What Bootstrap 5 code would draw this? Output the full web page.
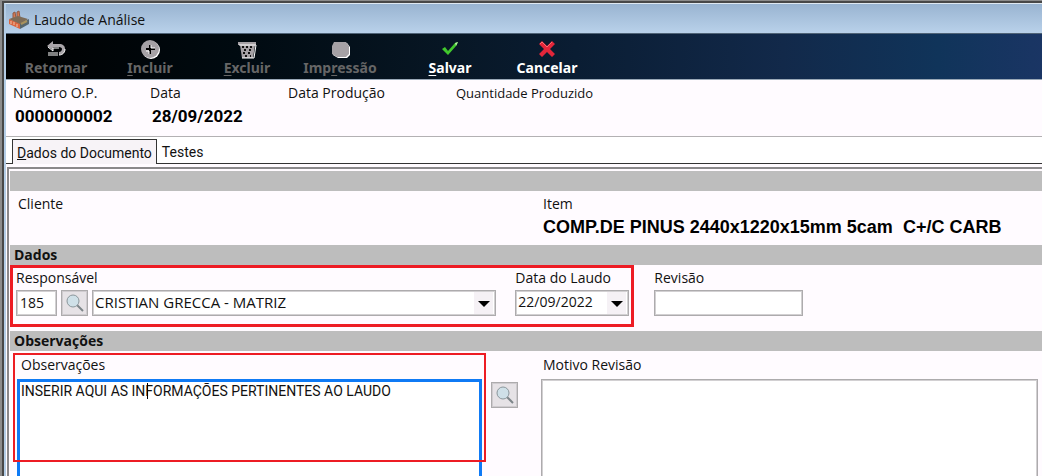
<!DOCTYPE html>
<html lang="pt-BR">
<head>
<meta charset="utf-8">
<meta name="viewport" content="width=device-width, initial-scale=1">
<title>Laudo de Análise</title>
<link href="https://cdn.jsdelivr.net/npm/bootstrap@5.3.0/dist/css/bootstrap.min.css" rel="stylesheet">
<style>
  :root { --panel: #fffbff; --bar: #bdbdbd; --edge: #adabad; --alert: #ed1c24; }
  body { font-family: "Open Sans", sans-serif; font-size: 14px; line-height: 18px; color: #111; background: var(--panel); }
  .frame { border-left: 2px solid #8c8c8c; border-top: 1px solid #8c8c8c; }
  .frame-inner { border-left: 2px solid #484848; border-top: 2px solid #484848; }
  .window { border-left: 2px solid #b4cde6; border-top: 1px solid #dfe9f2; background: var(--panel); }
  .titlebar { height: 30px; background: linear-gradient(#99b4d1, #b9d1ea); border-bottom: 1px solid #4f6377; padding: 2px 0 0 2px; }
  .toolbar { height: 46px; padding: 5px 0 0 5px; background: linear-gradient(90deg, #000 0, #000a10 22%, #071624 42%, #0a1d33 55%, #12294a 75%, #10345a 90%, #1a3564 100%); border-bottom: 1px solid #9aa9b8; }
  .tool { font: bold 14px/18px "Noto Sans", sans-serif; color: #fff; background: none; border: 0; padding: 0; }
  .tool:disabled { color: #666; }
  .tool u { text-underline-offset: 2px; }
  .tool svg { display: block; margin: 0 auto; }
  .c1 { width: 90px; } .c2 { width: 98px; } .c3 { width: 96px; } .c4 { width: 90px; } .c5 { width: 130px; } .c6 { width: 64px; }
  .summary { height: 57px; padding: 4px 0 0 7px; border-bottom: 1px solid #b3b1b3; }
  .s1 { width: 137px; } .s2 { width: 138px; } .s3 { width: 168px; } .s4 { font-size: 13px; }
  .strong-value { font: bold 17px/20px Roboto, sans-serif; color: #000; padding: 4px 0 0 2px; }
  .item-value { font: bold 18px/20px "Liberation Sans", sans-serif; color: #000; white-space: pre; padding-top: 4px; }
  .tabs { height: 27px; background: #fff; padding: 2px 0 0 6px; border-bottom: 1px solid #333; }
  .tab { font: 14px/20px Roboto, sans-serif; color: #111; background: none; border: 0; padding: 3px 5px 1px; height: 24px; }
  .tab.active { background: #f7f3f7; border: solid #333; border-width: 1px 1px 0; height: 25px; margin-bottom: -1px; padding: 3px 4px 1px; }
  .page-pane { margin: 3px 0 0 1px; border: 1px solid #8a888a; border-width: 2px 0 0 2px; padding: 2px 0 0 1px; }
  .section-bar { background: var(--bar); height: 20px; line-height: 19px; padding-left: 4px; font-weight: 700; font-size: 14px; margin: 0; }
  .split { display: grid; grid-template-columns: 531fr 501fr; }
  .indent { padding-left: 2px; }
  .lookups { width: 60.5%; border: 3px solid var(--alert); padding: 1px 2px 8px 3px; }
  .below { padding-top: 3px; }
  .field { height: 26px; border: 1px solid var(--edge); background-color: #fff; box-shadow: inset 0 0 0 1px #d2d0d2; border-radius: 0; padding: 0 0 2px 3px; line-height: 20px; color: #111; }
  select.field { appearance: none; padding-left: 2px; background: #fff url("data:image/svg+xml,%3Csvg xmlns='http://www.w3.org/2000/svg' width='21' height='22'%3E%3Cpath fill='%23f5f1f5' d='M0 0h19v22H0z'/%3E%3Cpath d='M4 9h12l-6 6z'/%3E%3C/svg%3E") right center no-repeat; }
  .person { font-size: 15px; }
  .code { width: 41px; } .date { width: 114px; margin-left: 19px; } .rev { width: 149px; margin-left: 20px; }
  .seek { width: 27px; height: 26px; border: 1px solid var(--edge); box-shadow: inset 0 0 0 1px #cfcbcf; background: #e6e2e6; padding: 0; display: flex; align-items: center; justify-content: center; }
  .obs-seek { margin: 3px 23px 0 9px; }
  .notes-cell { padding: 5px 4px 0 0; }
  .notes-cell.main { padding: 5px 0 0 7px; }
  .notes-label { margin-bottom: 5px; }
  .notes { display: block; height: 120px; resize: none; border: 1px solid var(--edge); box-shadow: inset 0 0 0 1px #d2d0d2; background: #fff; border-radius: 0; outline: 0; }
  .notes.editing { border: 3px solid #0f7af5; box-shadow: none; font: 14px/18px Roboto, sans-serif; padding: 0 1px; color: #111; }
  .mark-box { position: absolute; top: 2px; left: 3px; right: 55px; height: 109px; border: 2px solid var(--alert); pointer-events: none; }
  .caret { position: absolute; left: 137px; top: 32px; width: 1px; height: 16px; background: #000; }
</style>
</head>
<body>
<div class="frame vh-100 overflow-hidden"><div class="frame-inner"><div class="window">
  <header class="titlebar d-flex align-items-center gap-1">
    <svg width="22" height="20" viewBox="0 0 22 20" aria-hidden="true">
      <path d="M5 8V3l2-1 1 6M9 8V2l2-1 1 7" fill="#d77a52" stroke="#8e5b48"/>
      <path d="M1 9l9-3 10 3-8 6z" fill="#7d6c58"/>
      <path d="M1 9l11 5v5L1 14z" fill="#d9653f"/>
      <path d="M12 14l9-5v5l-9 5z" fill="#56666e"/>
      <path d="M3 11v3M6 12v3M9 14v3" stroke="#f1c4a8"/>
      <path d="M13 14l6-3" stroke="#a8925c" stroke-width="2"/>
    </svg>
    <span>Laudo de Análise</span>
  </header>

  <nav class="toolbar d-flex align-items-start" aria-label="Ações">
    <button class="tool c1" disabled><svg width="20" height="20" viewBox="0 0 20 20"><path d="M1 7l6-5v3h6c4 0 6 2 6 5s-2 6-6 6v-3c2 0 3-2 3-3s-1-2-3-2H7v3z" fill="#aaa6aa"/><path d="M2 8l5 4v-3h6M3 13v4M5 13v4M7 13v4M9 13v4M11 13v4M13 16c4 0 6-3 6-6" fill="none" stroke="#fff"/></svg>Retornar</button>
    <button class="tool c2" disabled><svg width="22" height="20" viewBox="0 0 22 20"><circle cx="12" cy="11" r="9" fill="#fff"/><circle cx="11" cy="10" r="9" fill="#a5a1a5"/><path d="M11 6v9M7 10h9" stroke="#000" stroke-width="2"/><path d="M12 6v3h4M7 12h3v3" stroke="#fff" fill="none"/></svg><u>I</u>ncluir</button>
    <button class="tool c3" disabled><svg width="20" height="20" viewBox="0 0 20 20"><path d="M1 3h18v3h-1l-2 13H5L3 6H1z" fill="#a5a1a5"/><path d="M2 6h17l-2 13H5" fill="none" stroke="#fff"/><path d="M5 8h2m2 0h2m2 0h2M7 11h2m3 0h2M6 14h2m3 0h2M8 17h2m3 0h1" stroke="#111" stroke-width="2"/></svg><u>E</u>xcluir</button>
    <button class="tool c4" disabled><svg width="20" height="20" viewBox="0 0 20 20"><path d="M5 4h12l3 4v8l-3 3H8l-5-3V8z" fill="#fff"/><path d="M4 3h12l3 4v8l-3 3H7l-5-3V7z" fill="#a5a1a5"/></svg>Imp<u>r</u>essão</button>
    <button class="tool c5"><svg width="18" height="20" viewBox="0 0 18 20"><path d="M1 10l3-2 3 4 7-8 3-1-2 4-8 9z" fill="#42c92d"/><path d="M14 4l3-1-2 4" fill="#b5f0a5"/></svg><u>S</u>alvar</button>
    <button class="tool c6"><svg width="18" height="20" viewBox="0 0 18 20"><path d="M4 2l5 5 5-5 3 3-5 5 5 5-3 3-5-5-5 5-3-3 5-5-5-5z" fill="#e3263a"/><path d="M2 5l2-2 5 5 5-5" fill="none" stroke="#ff6a70"/></svg>Cancelar</button>
  </nav>

  <section class="summary d-flex">
    <div class="s1"><div>Número O.P.</div><div class="strong-value">0000000002</div></div>
    <div class="s2"><div>Data</div><div class="strong-value">28/09/2022</div></div>
    <div class="s3">Data Produção</div>
    <div class="s4">Quantidade Produzido</div>
  </section>

  <div class="tabs d-flex" role="tablist">
    <button class="tab active" role="tab" aria-selected="true"><u>D</u>ados do Documento</button>
    <button class="tab" role="tab" aria-selected="false">Testes</button>
  </div>

  <main class="page-pane">
    <div class="section-bar"></div>
    <section class="split pt-1">
      <div class="ps-2">Cliente</div>
      <div class="indent"><div>Item</div><div class="item-value">COMP.DE PINUS 2440x1220x15mm 5cam  C+/C CARB</div></div>
    </section>

    <h2 class="section-bar mt-2">Dados</h2>
    <section class="d-flex">
      <div class="lookups d-flex">
        <div class="flex-fill">
          <label for="resp">Responsável</label>
          <div class="d-flex gap-1 below">
            <input id="resp" class="field code" value="185">
            <button class="seek" aria-label="Pesquisar responsável"><svg width="20" height="20" viewBox="0 0 20 20"><path d="M12 12l6 6" stroke="#7d8589" stroke-width="2"/><circle cx="8" cy="8" r="6" fill="#cfe0e8" stroke="#8b979c"/></svg></button>
            <select class="field person flex-fill" aria-label="Nome do responsável"><option>CRISTIAN GRECCA - MATRIZ</option></select>
          </div>
        </div>
        <div class="date">
          <label for="data">Data do Laudo</label>
          <div class="below"><select id="data" class="field w-100"><option>22/09/2022</option></select></div>
        </div>
      </div>
      <div class="rev pt-1">
        <label for="rev">Revisão</label>
        <div class="below"><input id="rev" class="field w-100"></div>
      </div>
    </section>

    <h2 class="section-bar mt-1">Observações</h2>
    <section class="split">
      <div class="notes-cell main position-relative">
        <label for="obs" class="notes-label ps-1">Observações</label>
        <div class="d-flex">
          <textarea id="obs" class="notes editing flex-fill" spellcheck="false">INSERIR AQUI AS INFORMAÇÕES PERTINENTES AO LAUDO</textarea>
          <button class="seek obs-seek" aria-label="Pesquisar observações"><svg width="20" height="20" viewBox="0 0 20 20"><path d="M12 12l6 6" stroke="#7d8589" stroke-width="2"/><circle cx="8" cy="8" r="6" fill="#cfe0e8" stroke="#8b979c"/></svg></button>
        </div>
        <span class="caret"></span>
        <div class="mark-box"></div>
      </div>
      <div class="notes-cell">
        <label for="motivo" class="notes-label indent">Motivo Revisão</label>
        <textarea id="motivo" class="notes w-100"></textarea>
      </div>
    </section>
  </main>
</div></div></div>
<script src="https://cdn.jsdelivr.net/npm/bootstrap@5.3.0/dist/js/bootstrap.bundle.min.js"></script>
</body>
</html>
